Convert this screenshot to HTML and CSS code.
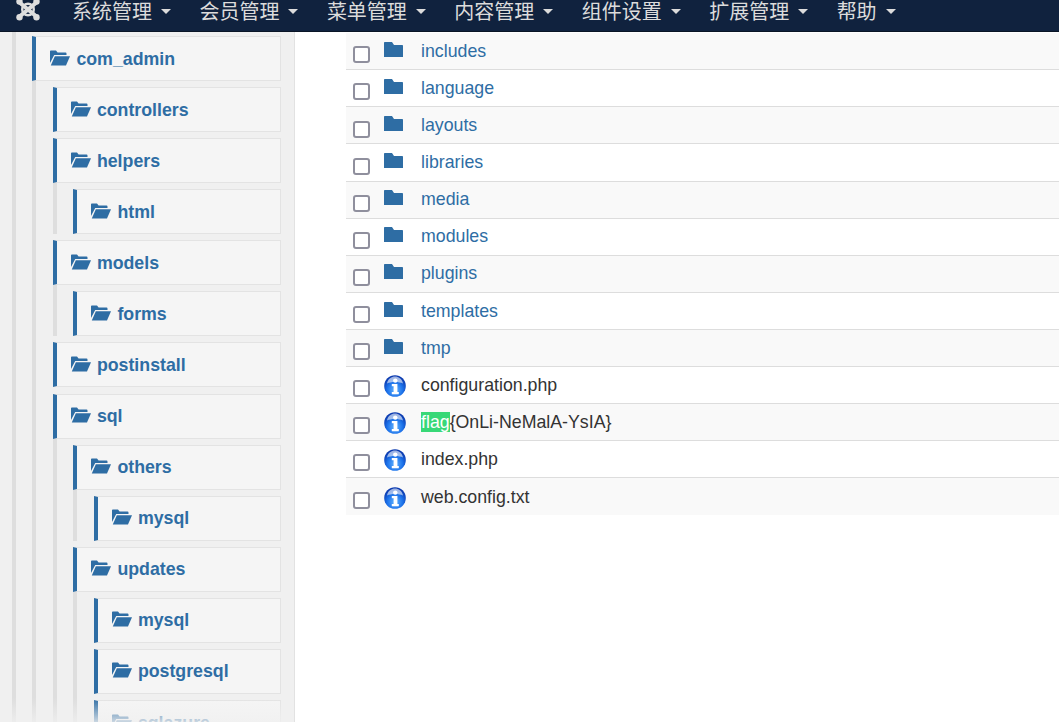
FILE: index.html
```html
<!DOCTYPE html>
<html lang="zh">
<head>
<meta charset="utf-8">
<title>com_admin</title>
<link rel="stylesheet" href="styles.css">
</head>
<body>
<svg class="defs" width="0" height="0" aria-hidden="true">
  <defs>
    <radialGradient id="infoFill" cx="50%" cy="68%" r="60%">
      <stop offset="0" stop-color="#63b4ff"/>
      <stop offset="0.6" stop-color="#1c72ea"/>
      <stop offset="1" stop-color="#0b3bb0"/>
    </radialGradient>
  </defs>
  <symbol id="open" viewBox="0 0 20 16">
    <path d="M0 1.600C0 1 .5.6 1 .6h5l1.600 2h8c.5 0 .9.4.9.9v1.600H4.200L0 13z"/>
    <path d="M4.800 6.200H20l-4 9.300H.8z"/>
  </symbol>
  <symbol id="closed" viewBox="0 0 19 15">
    <path d="M0 1c0-.6.4-1 1-1h7l2 3h8c.6 0 1 .4 1 1v11H0z"/>
  </symbol>
  <symbol id="info" viewBox="0 0 22 22">
    <circle cx="11" cy="11" r="10.800" fill="url(#infoFill)"/>
    <path d="M3 8.500C4 3.500 7.500 1.500 11 1.500s7 2 8 7C15 6.500 7 6.500 3 8.500z" fill="#fff" opacity=".6"/>
    <circle cx="11.300" cy="5.600" r="2.200" fill="#fff"/>
    <path d="M7.800 9h5.600v8h1.400v2.200H7.800V17h1.800v-5.800H7.800z" fill="#fff"/>
  </symbol>
</svg>

<header class="nav">
  <svg class="logo" viewBox="0 0 24 22" aria-hidden="true">
    <g fill="none" stroke="#dedede" stroke-linecap="round">
      <path d="M3 2L21 17" stroke-width="4"/>
      <path d="M21 2L3 17" stroke-width="4"/>
      <circle cx="12" cy="9.500" r="5.800" stroke-width="2.400"/>
    </g>
    <g fill="#dedede">
      <circle cx="3.500" cy="1.500" r="3.200"/>
      <circle cx="20.500" cy="1.500" r="3.200"/>
      <circle cx="3.500" cy="17.200" r="3.200"/>
      <circle cx="20.500" cy="17.200" r="3.200"/>
    </g>
  </svg>
  <ul class="menu">
    <li class="menu-item">系统管理<span class="caret"></span></li>
    <li class="menu-item">会员管理<span class="caret"></span></li>
    <li class="menu-item">菜单管理<span class="caret"></span></li>
    <li class="menu-item">内容管理<span class="caret"></span></li>
    <li class="menu-item">组件设置<span class="caret"></span></li>
    <li class="menu-item">扩展管理<span class="caret"></span></li>
    <li class="menu-item">帮助<span class="caret"></span></li>
  </ul>
</header>

<div class="page">
  <aside class="sidebar">
    <ul class="tree root">
      <li><a class="card" href="#"><svg class="open"><use href="#open"/></svg>com_admin</a>
        <ul class="tree">
          <li><a class="card" href="#"><svg class="open"><use href="#open"/></svg>controllers</a></li>
          <li><a class="card" href="#"><svg class="open"><use href="#open"/></svg>helpers</a>
            <ul class="tree">
              <li><a class="card" href="#"><svg class="open"><use href="#open"/></svg>html</a></li>
            </ul>
          </li>
          <li><a class="card" href="#"><svg class="open"><use href="#open"/></svg>models</a>
            <ul class="tree">
              <li><a class="card" href="#"><svg class="open"><use href="#open"/></svg>forms</a></li>
            </ul>
          </li>
          <li><a class="card" href="#"><svg class="open"><use href="#open"/></svg>postinstall</a></li>
          <li><a class="card" href="#"><svg class="open"><use href="#open"/></svg>sql</a>
            <ul class="tree">
              <li><a class="card" href="#"><svg class="open"><use href="#open"/></svg>others</a>
                <ul class="tree">
                  <li><a class="card" href="#"><svg class="open"><use href="#open"/></svg>mysql</a></li>
                </ul>
              </li>
              <li><a class="card" href="#"><svg class="open"><use href="#open"/></svg>updates</a>
                <ul class="tree">
                  <li><a class="card" href="#"><svg class="open"><use href="#open"/></svg>mysql</a></li>
                  <li><a class="card" href="#"><svg class="open"><use href="#open"/></svg>postgresql</a></li>
                  <li><a class="card" href="#"><svg class="open"><use href="#open"/></svg>sqlazure</a></li>
                </ul>
              </li>
            </ul>
          </li>
        </ul>
      </li>
    </ul>
    <div class="fade"></div>
  </aside>

  <main class="files">
    <ul class="file-list">
      <li class="row"><input class="check" type="checkbox"><svg class="folder"><use href="#closed"/></svg><a class="name link" href="#">includes</a></li>
      <li class="row"><input class="check" type="checkbox"><svg class="folder"><use href="#closed"/></svg><a class="name link" href="#">language</a></li>
      <li class="row"><input class="check" type="checkbox"><svg class="folder"><use href="#closed"/></svg><a class="name link" href="#">layouts</a></li>
      <li class="row"><input class="check" type="checkbox"><svg class="folder"><use href="#closed"/></svg><a class="name link" href="#">libraries</a></li>
      <li class="row"><input class="check" type="checkbox"><svg class="folder"><use href="#closed"/></svg><a class="name link" href="#">media</a></li>
      <li class="row"><input class="check" type="checkbox"><svg class="folder"><use href="#closed"/></svg><a class="name link" href="#">modules</a></li>
      <li class="row"><input class="check" type="checkbox"><svg class="folder"><use href="#closed"/></svg><a class="name link" href="#">plugins</a></li>
      <li class="row"><input class="check" type="checkbox"><svg class="folder"><use href="#closed"/></svg><a class="name link" href="#">templates</a></li>
      <li class="row"><input class="check" type="checkbox"><svg class="folder"><use href="#closed"/></svg><a class="name link" href="#">tmp</a></li>
      <li class="row"><input class="check" type="checkbox"><svg class="info"><use href="#info"/></svg><span class="name">configuration.php</span></li>
      <li class="row"><input class="check" type="checkbox"><svg class="info"><use href="#info"/></svg><span class="name"><mark class="hit">flag</mark>{OnLi-NeMalA-YsIA}</span></li>
      <li class="row"><input class="check" type="checkbox"><svg class="info"><use href="#info"/></svg><span class="name">index.php</span></li>
      <li class="row"><input class="check" type="checkbox"><svg class="info"><use href="#info"/></svg><span class="name">web.config.txt</span></li>
    </ul>
  </main>
</div>
</body>
</html>
```
FILE: styles.css
```css
* { box-sizing: border-box; }
html, body { margin: 0; height: 100%; overflow: hidden; background: #fff; }
body { font-family: "Liberation Sans", Arial, sans-serif; font-size: 17.75px; color: #333; }
ul { list-style: none; margin: 0; padding: 0; }
a { text-decoration: none; }
.defs { display: block; height: 0; }

.nav {
  height: 32px;
  display: flex;
  align-items: flex-start;
  padding-left: 16px;
  background: #10223e;
  border-bottom: 1px solid #0a1526;
  overflow: hidden;
}
.logo { width: 24px; height: 22px; flex: none; margin-right: 32px; }
.menu { display: flex; gap: 28.45px; }
.menu-item {
  display: flex;
  align-items: center;
  height: 22px;
  font-family: "Noto Sans CJK SC", "Liberation Sans", sans-serif;
  font-size: 20px;
  line-height: 22px;
  color: #dcdcdc;
  white-space: nowrap;
}
.caret {
  width: 0;
  height: 0;
  margin-left: 9px;
  border-top: 5px solid #dcdcdc;
  border-left: 5px solid transparent;
  border-right: 5px solid transparent;
}

.page { display: flex; height: calc(100vh - 32px); }
.sidebar {
  position: relative;
  flex: none;
  width: 295px;
  height: 100%;
  overflow: hidden;
  padding: 0 13px 0 11.9px;
  background: #f0f0f0;
  border-right: 1px solid #e2e2e2;
}
.tree { border-left: 4px solid #dedede; padding: 6.08px 0 0 16.5px; }
.tree li + li { margin-top: 6.08px; }
.root { padding-top: 4px; height: 900px; }
.card {
  display: flex;
  align-items: center;
  height: 45px;
  padding: 1px 0 0 14px;
  background: #f5f5f5;
  border: 1px solid #e3e3e3;
  border-left: 4px solid #2e6da4;
  color: #2e6da4;
  font-weight: 700;
}
.open { width: 20px; height: 16px; flex: none; margin: -3px 6px 0 0; fill: #2e6da4; }
.fade {
  position: absolute;
  left: 0;
  right: 0;
  bottom: 0;
  height: 24px;
  background: linear-gradient(rgba(240, 240, 240, 0), rgba(240, 240, 240, 0.8));
}

.files { flex: 1; min-width: 0; padding: 1.2px 0 0 51px; }
.row {
  display: flex;
  align-items: center;
  height: 37.1px;
  padding: 0.3px 0 0 7px;
  border-bottom: 1px solid #ddd;
}
.row:nth-child(odd) { background: #f9f9f9; }
.row:last-child { border-bottom: 0; }
.check {
  appearance: none;
  flex: none;
  width: 17px;
  height: 17px;
  margin: 7px 14px 0 0;
  background: #fff;
  border: 2px solid #8f8f9d;
  border-radius: 3px;
}
.folder { width: 19px; height: 15px; flex: none; margin: -4px 18px 0 0; fill: #2e6da4; }
.info { width: 22px; height: 22px; flex: none; margin: 1px 15px 0 0; }
.name { color: #333; white-space: nowrap; }
.link { color: #2e6da4; }
.hit { background: #38d877; color: #fff; }
```
